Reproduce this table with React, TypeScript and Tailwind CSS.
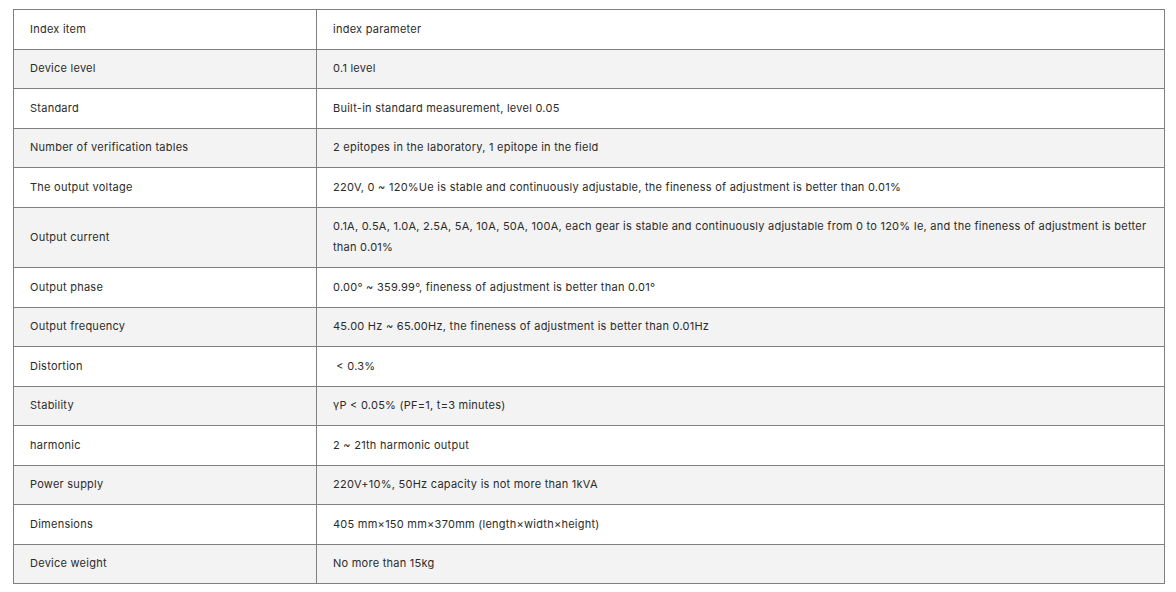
const ROWS: [string, string][] = [
  ["Index item", "index parameter"],
  ["Device level", "0.1 level"],
  ["Standard", "Built-in standard measurement, level 0.05"],
  ["Number of verification tables", "2 epitopes in the laboratory, 1 epitope in the field"],
  [
    "The output voltage",
    "220V, 0 ~ 120%Ue is stable and continuously adjustable, the fineness of adjustment is better than 0.01%",
  ],
  [
    "Output current",
    "0.1A, 0.5A, 1.0A, 2.5A, 5A, 10A, 50A, 100A, each gear is stable and continuously adjustable from 0 to 120% Ie, and the fineness of adjustment is better than 0.01%",
  ],
  ["Output phase", "0.00° ~ 359.99°, fineness of adjustment is better than 0.01°"],
  ["Output frequency", "45.00 Hz ~ 65.00Hz, the fineness of adjustment is better than 0.01Hz"],
  ["Distortion", "\u00a0< 0.3%"],
  ["Stability", "γP < 0.05% (PF=1, t=3 minutes)"],
  ["harmonic", "2 ~ 21th harmonic output"],
  ["Power supply", "220V+10%, 50Hz capacity is not more than 1kVA"],
  ["Dimensions", "405 mm×150 mm×370mm (length×width×height)"],
  ["Device weight", "No more than 15kg"],
];

export default function App() {
  return (
    <div className="bg-white pl-[13px] pt-[9px] pb-[9px]" style={{ fontFamily: "Inter, 'Open Sans', sans-serif" }}>
      <table className="w-[1152px] border-collapse text-[11px] leading-[21px] tracking-[0.25px] text-[#2b2b2b]">
        <tbody>
          {ROWS.map(([item, value], i) => (
            <tr key={item} className={i % 2 === 1 ? "bg-[#f3f3f3]" : "bg-white"}>
              <td className="w-[303px] border border-[#808080] py-[8.75px] pl-[16px] pr-4 align-middle">
                {item}
              </td>
              <td className="border border-[#808080] py-[8.75px] pl-[16px] pr-[12px] align-middle">{value}</td>
            </tr>
          ))}
        </tbody>
      </table>
    </div>
  );
}
